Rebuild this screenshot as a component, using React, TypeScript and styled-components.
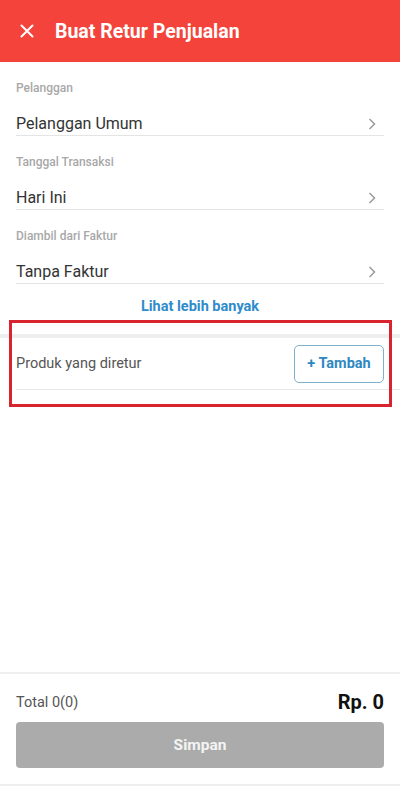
import React from "react";
import styled, { createGlobalStyle } from "styled-components";

const Global = createGlobalStyle`
  html, body { margin: 0; padding: 0; background: #fff; }
  body { font-family: Roboto, "Noto Sans", sans-serif; -webkit-font-smoothing: antialiased; }
  * { box-sizing: border-box; }
`;

const Page = styled.div`
  width: 400px;
  height: 786px;
  display: flex;
  flex-direction: column;
  background: #fff;
  overflow: hidden;
`;

const Header = styled.header`
  height: 62px;
  background: #f4433a;
  display: flex;
  align-items: center;
  padding-left: 20px;
  gap: 21px;
  flex-shrink: 0;
`;

const Title = styled.h1`
  margin: 0;
  color: #fff;
  font-size: 19.5px;
  font-weight: 700;
`;

const Content = styled.main`
  flex: 1;
  display: flex;
  flex-direction: column;
`;

const Form = styled.div`
  padding: 0 16px;
  display: flex;
  flex-direction: column;
`;

const Field = styled.div`
  padding-top: 18px;
  display: flex;
  flex-direction: column;
`;

const Label = styled.div`
  font-size: 12px;
  line-height: 16px;
  font-weight: 500;
  color: #a8a8a8;
`;

const ValueRow = styled.div`
  padding-top: 17px;
  height: 40px;
  display: flex;
  align-items: center;
  justify-content: space-between;
  border-bottom: 1px solid #e4e4e4;
`;

const Value = styled.span`
  font-size: 16px;
  line-height: 22px;
  color: #333;
`;

const Chevron = styled.svg`
  width: 8px;
  height: 12px;
  margin-right: 8px;
`;

const MoreLink = styled.div`
  margin-top: 13px;
  height: 20px;
  line-height: 20px;
  text-align: center;
  color: #2f8ccc;
  font-weight: 700;
  font-size: 14.5px;
`;

const ProductSection = styled.section`
  position: relative;
  margin-top: 17px;
  border-top: 4px solid #eeeeee;
`;

const ProductRow = styled.div`
  height: 52px;
  margin-left: 16px;
  padding-right: 16px;
  display: flex;
  align-items: center;
  justify-content: space-between;
  border-bottom: 1px solid #e8e8e8;
`;

const ProductLabel = styled.span`
  font-size: 14.5px;
  color: #555;
`;

const AddButton = styled.button`
  width: 90px;
  height: 38px;
  border: 1.5px solid #7fb1cc;
  border-radius: 5px;
  background: #fff;
  color: #2d88c2;
  font-family: inherit;
  font-weight: 700;
  font-size: 14.5px;
  padding: 0;
`;

const Highlight = styled.div`
  position: absolute;
  left: 9px;
  top: -18px;
  width: 383px;
  height: 87px;
  border: 3px solid #d8242f;
  pointer-events: none;
`;

const Footer = styled.footer`
  border-top: 2px solid #f0f0f0;
  border-bottom: 2px solid #eeeeee;
  padding: 16px 16px 16px;
  display: flex;
  flex-direction: column;
  gap: 8px;
  flex-shrink: 0;
`;

const TotalRow = styled.div`
  height: 24px;
  display: flex;
  align-items: center;
  justify-content: space-between;
`;

const TotalLabel = styled.span`
  font-size: 14.5px;
  color: #555;
`;

const TotalValue = styled.span`
  font-size: 20px;
  font-weight: 700;
  color: #111;
`;

const SaveButton = styled.button`
  height: 46px;
  border: none;
  border-radius: 4px;
  background: #ababab;
  color: #f4f4f4;
  font-family: inherit;
  font-size: 15.5px;
  font-weight: 700;
`;

const fields = [
  { label: "Pelanggan", value: "Pelanggan Umum" },
  { label: "Tanggal Transaksi", value: "Hari Ini" },
  { label: "Diambil dari Faktur", value: "Tanpa Faktur" },
];

export default function App() {
  return (
    <Page>
      <Global />
      <Header>
        <svg width="14" height="14" viewBox="0 0 14 14">
          <path d="M1.5 1.5 L12.5 12.5 M12.5 1.5 L1.5 12.5" stroke="#fff" strokeWidth="2" strokeLinecap="round" />
        </svg>
        <Title>Buat Retur Penjualan</Title>
      </Header>
      <Content>
        <Form>
          {fields.map((f) => (
            <Field key={f.label}>
              <Label>{f.label}</Label>
              <ValueRow>
                <Value>{f.value}</Value>
                <Chevron viewBox="0 0 8 12">
                  <path d="M1.5 1 L6.5 6 L1.5 11" fill="none" stroke="#9a9a9a" strokeWidth="1.5" />
                </Chevron>
              </ValueRow>
            </Field>
          ))}
          <MoreLink>Lihat lebih banyak</MoreLink>
        </Form>
        <ProductSection>
          <ProductRow>
            <ProductLabel>Produk yang diretur</ProductLabel>
            <AddButton>+ Tambah</AddButton>
          </ProductRow>
          <Highlight />
        </ProductSection>
      </Content>
      <Footer>
        <TotalRow>
          <TotalLabel>Total 0(0)</TotalLabel>
          <TotalValue>Rp. 0</TotalValue>
        </TotalRow>
        <SaveButton>Simpan</SaveButton>
      </Footer>
    </Page>
  );
}
